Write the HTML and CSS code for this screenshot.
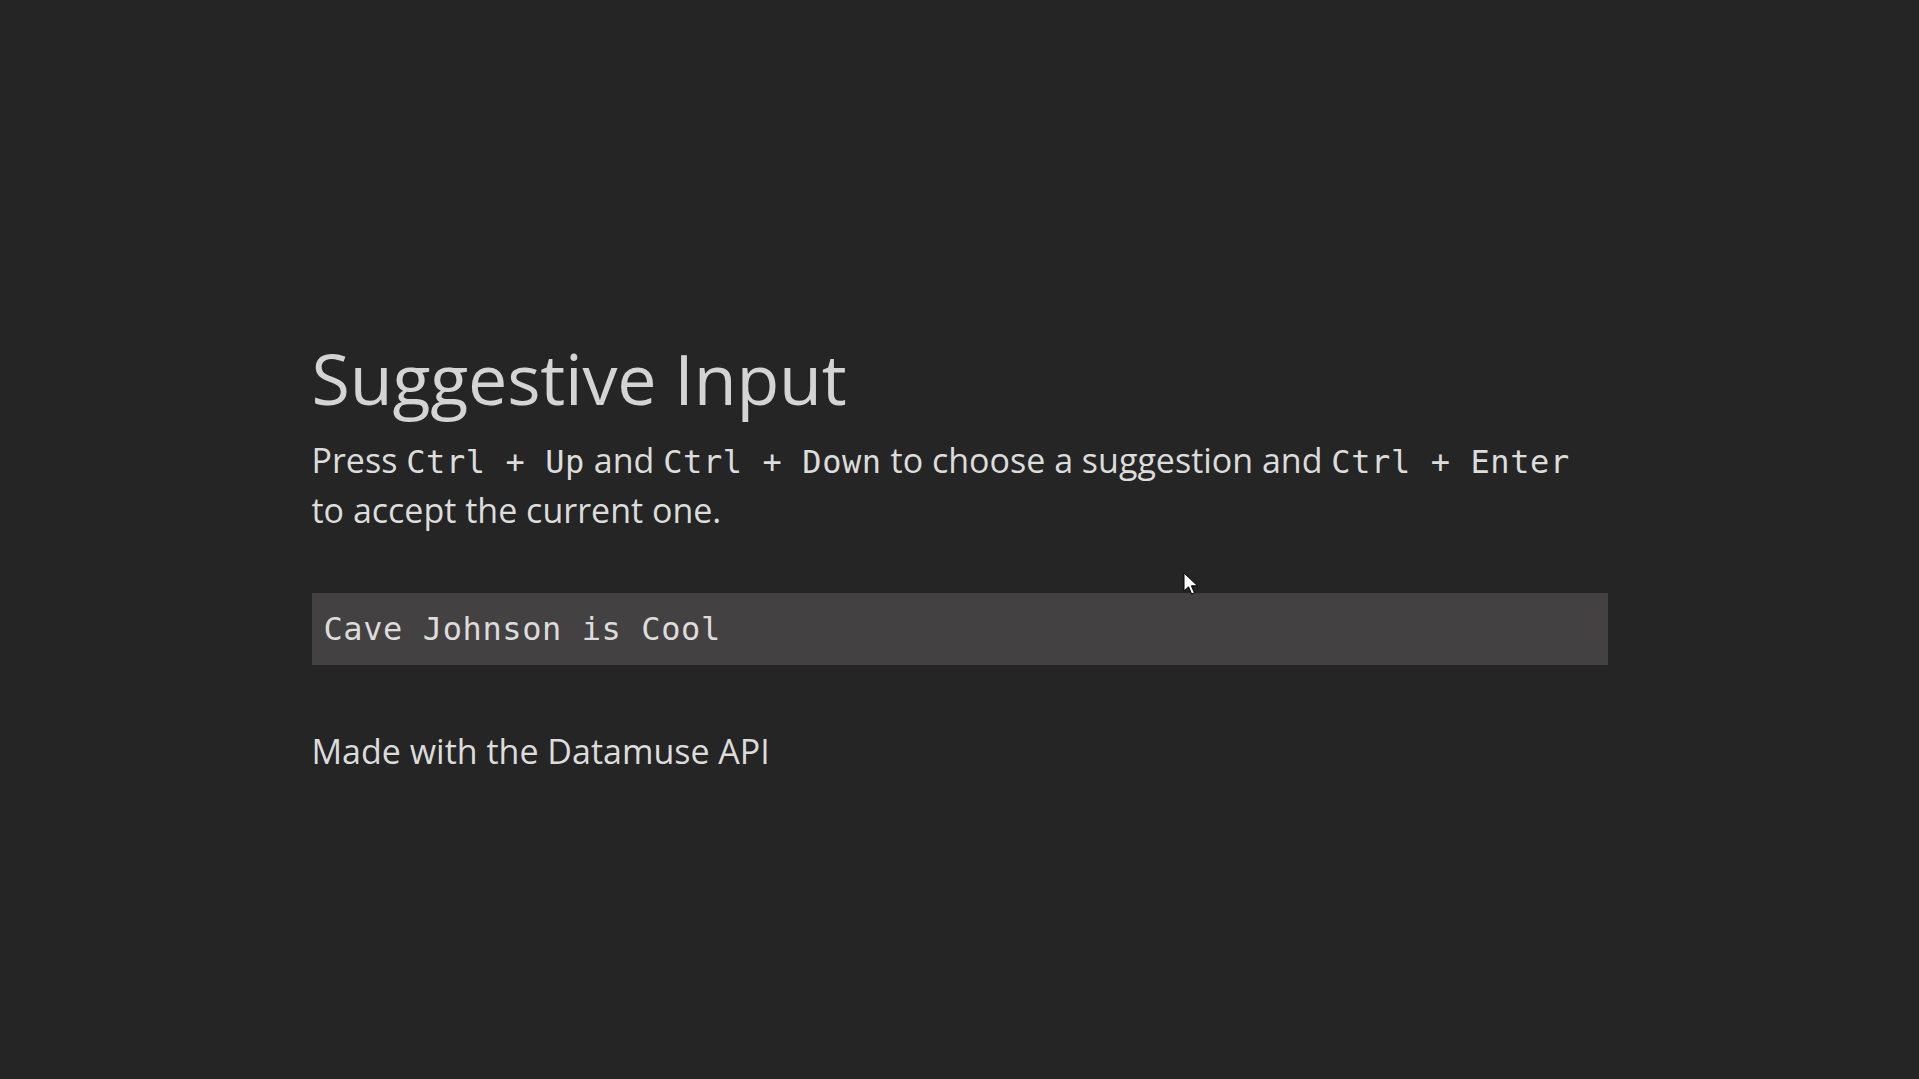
FILE: index.html
```html
<!DOCTYPE html>
<html lang="en">
<head>
<meta charset="utf-8">
<title>Suggestive Input</title>
<link rel="stylesheet" href="styles.css">
</head>
<body>
<main class="page">
  <h1 class="title">Suggestive Input</h1>
  <p class="intro">Press <code>Ctrl + Up</code> and <code>Ctrl + Down</code> to choose a suggestion and <code>Ctrl + Enter</code> to accept the current one.</p>
  <div class="field"><input class="suggest" type="text" value="Cave Johnson is Cool" spellcheck="false"></div>
  <p class="credit">Made with the Datamuse API</p>
</main>
<svg class="cursor" width="18" height="26" viewBox="0 0 18 26" aria-hidden="true">
  <path d="M1 1 L1 19 L5.5 14.8 L8.6 22 L11.4 20.8 L8.4 13.8 L14.5 13.8 Z" fill="#ffffff" stroke="#000000" stroke-width="1" stroke-linejoin="miter"/>
</svg>
</body>
</html>
```
FILE: styles.css
```css
html, body {
  margin: 0;
  padding: 0;
  background: #252525;
  height: 100%;
}
body {
  color: #dcdcdc;
  font-family: "Open Sans", "Noto Sans", sans-serif;
}
.page {
  width: 1296px;
  margin: 0 auto;
  padding-top: 333px;
}
.title {
  margin: 0;
  font-weight: 400;
  font-size: 70px;
  line-height: 90px;
  color: #d4d4d4;
  letter-spacing: -0.2px;
}
.intro {
  margin: 13px 0 0;
  font-size: 34px;
  line-height: 49.5px;
}
code {
  font-family: "DejaVu Sans Mono", "Liberation Mono", monospace;
  font-size: 32px;
  line-height: 1;
  letter-spacing: 0.6px;
}
.field {
  margin-top: 58px;
}
.suggest {
  display: block;
  box-sizing: border-box;
  width: 100%;
  height: 72px;
  border: 0;
  outline: none;
  margin: 0;
  padding: 0 12px;
  background: #434142;
  color: #dcdcdc;
  font-family: "DejaVu Sans Mono", "Liberation Mono", monospace;
  font-size: 32px;
  letter-spacing: 0.6px;
}
.credit {
  margin: 62px 0 0;
  font-size: 34px;
  line-height: 49.5px;
}
.cursor {
  position: absolute;
  left: 1183px;
  top: 572px;
}
```
